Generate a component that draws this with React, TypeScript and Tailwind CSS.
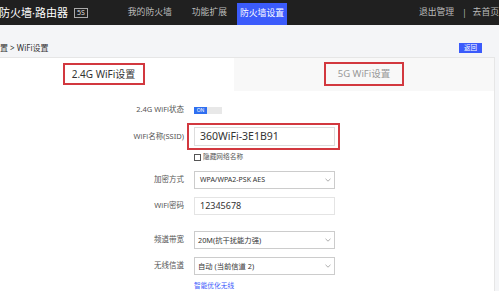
import React from "react";

const Chevron = () => (
  <svg width="6" height="4" viewBox="0 0 6 4" className="ml-auto mr-[3px]">
    <path d="M0.5 0.8 L3 3.2 L5.5 0.8" fill="none" stroke="#999" strokeWidth="0.8" />
  </svg>
);

function Row({ label, children, h, mt }: { label: string; children: React.ReactNode; h: string; mt: string }) {
  return (
    <div className={`flex items-center ${h} ${mt}`}>
      <div className="w-[183px] text-right text-[7.5px] text-[#555] leading-none">{label}</div>
      <div className="ml-[10px] flex items-center h-full">{children}</div>
    </div>
  );
}

export default function App() {
  return (
    <div
      className="w-[499px] h-[291px] overflow-hidden bg-[#f4f5f7] relative"
      style={{ fontFamily: '"Noto Sans", "Noto Sans CJK SC", sans-serif' }}
    >
      {/* top bar */}
      <div className="flex h-[25px] bg-[#202020] items-center">
        <span className="text-[11px] text-white leading-none -ml-[1px] whitespace-nowrap">防火墙·路由器</span>
        <span className="ml-[6px] border border-[#aaa] text-[7px] text-[#ddd] leading-[7px] px-[2px] py-[0.5px]">5S</span>
        <span className="ml-[40px] text-[8.8px] text-[#bbb] leading-none whitespace-nowrap">我的防火墙</span>
        <span className="ml-[20px] text-[8.8px] text-[#bbb] leading-none whitespace-nowrap">功能扩展</span>
        <div className="ml-[10px] self-end h-[22px] w-[62px] bg-[#3b5bfb] flex items-center justify-center text-[8.8px] text-white whitespace-nowrap">
          防火墙设置
        </div>
        <span className="ml-[132px] text-[8.8px] text-[#bbb] leading-none whitespace-nowrap">退出管理</span>
        <span className="ml-[8px] text-[8px] text-[#bbb] leading-none">|</span>
        <span className="ml-[6px] text-[8.8px] text-[#bbb] leading-none whitespace-nowrap">去首页</span>
      </div>

      {/* breadcrumb */}
      <div className="flex items-center h-[10px] mt-[18px] mb-[4px]">
        <span className="-ml-[8px] text-[8px] text-[#333] leading-none whitespace-nowrap">设置 &gt; WiFi设置</span>
        <div className="ml-auto mr-[17px] w-[23px] h-[10px] bg-[#3b5bfb] text-white text-[6.5px] leading-none flex items-center justify-center">
          返回
        </div>
      </div>

      {/* card */}
      <div className="-ml-[28px] w-[523px] h-[240px] bg-white border border-[#e6e6e6]">
        {/* tabs */}
        <div className="flex h-[33px]">
          <div className="w-[261px] flex items-start justify-center pt-[5px]">
            <div className="w-[82px] h-[22px] border-2 border-[#d2383f] flex items-center justify-center text-[10px] text-[#333] whitespace-nowrap">
              2.4G WiFi设置
            </div>
          </div>
          <div className="flex-1 bg-[#f8f8f8] flex items-start justify-center pt-[4px]">
            <div className="w-[80px] h-[24px] border-2 border-[#d2383f] flex items-center justify-center text-[9.5px] text-[#999] whitespace-nowrap">
              5G WiFi设置
            </div>
          </div>
        </div>

        {/* form */}
        <div className="ml-[28px] flex flex-col">
          <Row label="2.4G WiFi状态" h="h-[10px]" mt="mt-[14px]">
            <div className="flex w-[28px] h-[7px] bg-[#e8e8e8]">
              <div className="w-[13px] h-full bg-[#2f6ff0] text-white text-[5px] leading-none flex items-center justify-center">ON</div>
            </div>
          </Row>

          <Row label="WiFi名称(SSID)" h="h-[19px]" mt="mt-[12px]">
            <div className="relative w-[141px] h-[19px] border border-[#ddd] flex items-center pl-[5px] text-[10.5px] text-[#333]">
              360WiFi-3E1B91
              <div className="absolute -left-[8px] -top-[5px] w-[153px] h-[27px] border-2 border-[#d2383f]" />
            </div>
          </Row>

          <Row label="" h="h-[8px]" mt="mt-[7px]">
            <div className="flex items-center">
              <div className="w-[7px] h-[7px] border border-[#555] bg-white" />
              <span className="ml-[2px] text-[6.7px] text-[#555] leading-none whitespace-nowrap">隐藏网络名称</span>
            </div>
          </Row>

          <Row label="加密方式" h="h-[18px]" mt="mt-[10px]">
            <div className="w-[141px] h-[18px] border border-[#ccc] flex items-center pl-[5px] text-[7px] text-[#333] whitespace-nowrap">
              WPA/WPA2-PSK AES
              <Chevron />
            </div>
          </Row>

          <Row label="WiFi密码" h="h-[18px]" mt="mt-[8px]">
            <div className="w-[141px] h-[18px] border border-[#e4e4e4] flex items-center pl-[5px] text-[9px] text-[#333]">
              12345678
            </div>
          </Row>

          <Row label="频道带宽" h="h-[18px]" mt="mt-[16px]">
            <div className="w-[141px] h-[18px] border border-[#ccc] flex items-center pl-[3px] text-[7.3px] text-[#333] whitespace-nowrap">
              20M(抗干扰能力强)
              <Chevron />
            </div>
          </Row>

          <Row label="无线信道" h="h-[18px]" mt="mt-[8px]">
            <div className="w-[141px] h-[18px] border border-[#ccc] flex items-center pl-[3px] text-[7.3px] text-[#333] whitespace-nowrap">
              自动 (当前信道 2)
              <Chevron />
            </div>
          </Row>

          <Row label="" h="h-[10px]" mt="mt-[6px]">
            <span className="text-[6.7px] text-[#3b5bfb] leading-none whitespace-nowrap">智能优化无线</span>
          </Row>
        </div>
      </div>
    </div>
  );
}
